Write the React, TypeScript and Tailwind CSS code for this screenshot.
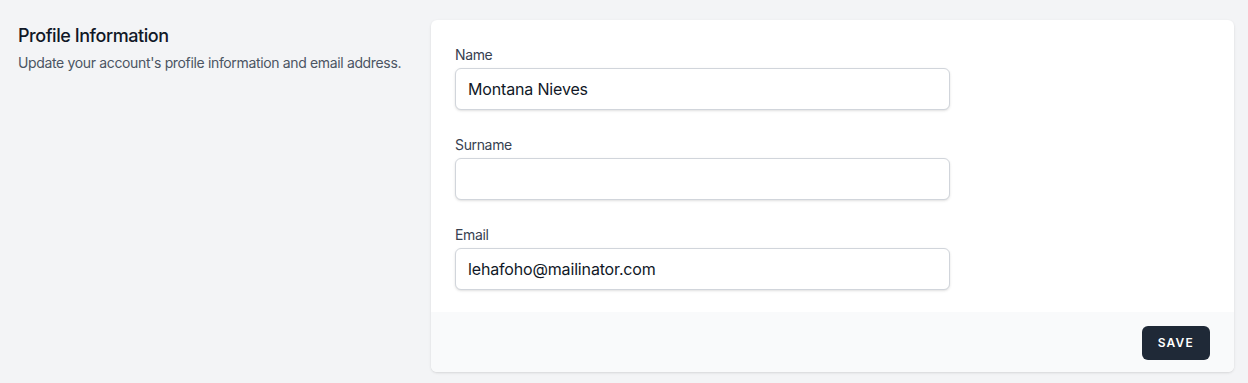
import React, { useState } from "react";

const font = { fontFamily: "Inter, 'Noto Sans', sans-serif" };

function Field({
  label,
  value,
  onChange,
  type = "text",
}: {
  label: string;
  value: string;
  onChange: (v: string) => void;
  type?: string;
}) {
  return (
    <div className="col-span-4">
      <label className="block pt-px text-sm leading-5 tracking-tight text-[#374151]">{label}</label>
      <input
        type={type}
        value={value}
        onChange={(e) => onChange(e.target.value)}
        className="mt-[3px] block w-full h-[42px] px-3 rounded-md border border-[#d1d5db] bg-white text-base tracking-[-0.01em] text-[#111827] shadow-sm outline-none"
      />
    </div>
  );
}

export default function App() {
  const [name, setName] = useState("Montana Nieves");
  const [surname, setSurname] = useState("");
  const [email, setEmail] = useState("lehafoho@mailinator.com");

  return (
    <div className="min-h-[383px] bg-[#f3f4f6] pt-5 pl-[18px] pr-[14px]" style={font}>
      <div className="flex">
        <div className="w-[413px] shrink-0 pt-[2px]">
          <h3 className="text-lg leading-7 font-medium tracking-tight text-[#111827]">Profile Information</h3>
          <p className="mt-[3px] text-sm leading-5 tracking-tight text-[#4b5563]">
            Update your account's profile information and email address.
          </p>
        </div>
        <form className="flex-1 rounded-md bg-white shadow" onSubmit={(e) => e.preventDefault()}>
          <div className="px-6 pt-6 pb-[22px]">
            <div className="grid grid-cols-6 gap-6">
              <Field label="Name" value={name} onChange={setName} />
              <Field label="Surname" value={surname} onChange={setSurname} />
              <Field label="Email" type="email" value={email} onChange={setEmail} />
            </div>
          </div>
          <div className="flex items-start justify-end h-[60px] pt-[14px] px-6 bg-[#f9fafb] rounded-b-md">
            <button
              type="submit"
              className="inline-flex items-center h-[34px] px-4 rounded-md bg-[#1f2937] text-xs font-semibold uppercase tracking-widest text-white"
            >
              Save
            </button>
          </div>
        </form>
      </div>
    </div>
  );
}
